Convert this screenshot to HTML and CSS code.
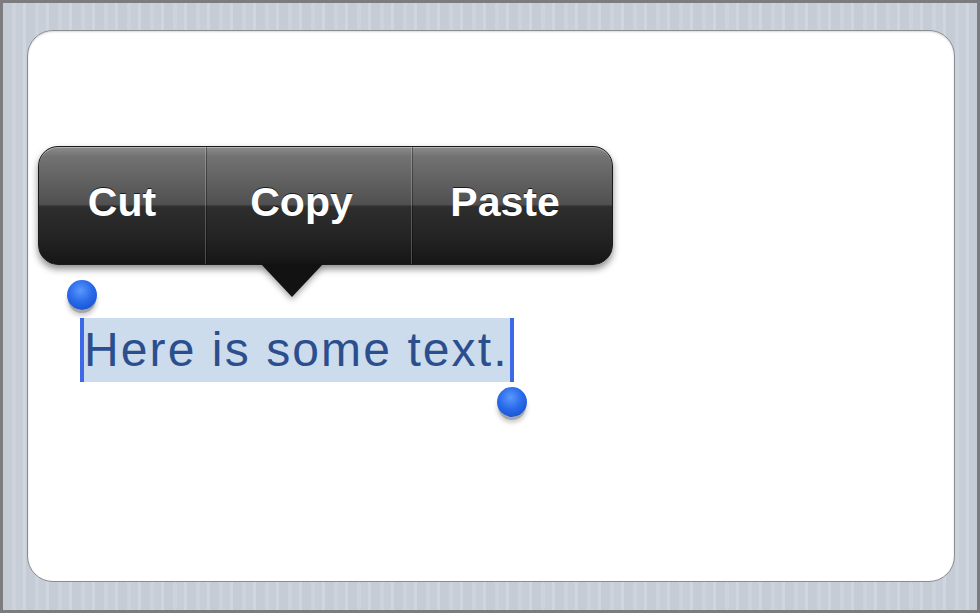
FILE: index.html
```
<!DOCTYPE html>
<html lang="en">
<head>
    <meta charset="UTF-8">
    <meta name="viewport" content="width=device-width, initial-scale=1.0">
    <title>Edit Menu</title>
    <link rel="stylesheet" href="styles.css">
</head>
<body>
    <div class="frame">
        <div class="card">
            <div class="edit-menu">
                <div class="menu-item">Cut</div>
                <div class="menu-item">Copy</div>
                <div class="menu-item">Paste</div>
                <div class="menu-arrow"></div>
            </div>
            <div class="content">
                <span class="selection">Here is some text.<span class="handle start"></span><span class="handle end"></span></span>
            </div>
        </div>
    </div>
</body>
</html>
```

FILE: styles.css
```
* {
    box-sizing: border-box;
}
body {
    margin: 0;
    padding: 0;
    font-family: "Liberation Sans", Arial, sans-serif;
    overflow: hidden;
}
.frame {
    width: 980px;
    height: 613px;
    border: 3px solid #7c7c7e;
    padding: 27px 22px 28px 24px;
    background-color: #c9d0d9;
    background-image: repeating-linear-gradient(90deg, #c5ccd6 0 9px, #cdd3dc 9px 13px, #c7ced8 13px 20px, #d0d6de 20px 23px);
}
.card {
    position: relative;
    width: 928px;
    height: 552px;
    background: #fff;
    border: 1px solid #8a8c90;
    border-radius: 26px;
    box-shadow: inset 0 1px 2px rgba(0, 0, 0, 0.15);
}
.edit-menu {
    position: absolute;
    left: 10px;
    top: 115px;
    width: 575px;
    height: 119px;
    display: grid;
    grid-template-columns: 166px 206px 1fr;
    border: 1px solid #1a1a1a;
    border-radius: 20px;
    background: linear-gradient(#8c8c8c 0%, #727272 8%, #505050 49%, #2e2e2e 51%, #222 80%, #161616 100%);
    box-shadow: 0 4px 7px rgba(0, 0, 0, 0.45), inset 0 1px 0 rgba(255, 255, 255, 0.35);
    z-index: 2;
}
.menu-item {
    display: flex;
    align-items: center;
    justify-content: center;
    color: #fff;
    font-weight: bold;
    font-size: 41px;
    padding: 0 14px 6px 0;
    text-shadow: 0 -1px 0 rgba(0, 0, 0, 0.7);
    border-left: 1px solid rgba(255, 255, 255, 0.22);
    box-shadow: inset 1px 0 0 rgba(0, 0, 0, 0.35);
}
.menu-item:first-child {
    padding-right: 0;
    border-left: none;
    box-shadow: none;
}
.menu-arrow {
    position: absolute;
    left: 222px;
    top: 117px;
    width: 0;
    height: 0;
    border-left: 31px solid transparent;
    border-right: 31px solid transparent;
    border-top: 33px solid #121212;
    filter: drop-shadow(0 3px 3px rgba(0, 0, 0, 0.35));
}
.content {
    padding: 287px 0 0 52px;
}
.selection {
    position: relative;
    display: inline-block;
    height: 64px;
    line-height: 64px;
    padding: 0 1px 0 0;
    font-size: 48px;
    letter-spacing: 2.1px;
    color: #2b4f8e;
    background: #cddcec;
    border-left: 4px solid #3d68e8;
    border-right: 4px solid #3d68e8;
}
.handle {
    position: absolute;
    width: 30px;
    height: 30px;
    border-radius: 50%;
    background: radial-gradient(circle at 45% 35%, #5a98fb 0%, #2a6bea 45%, #0f46c4 100%);
    box-shadow: 0 4px 0 -1px rgba(150, 150, 150, 0.7), 0 6px 4px rgba(0, 0, 0, 0.2);
}
.handle.start {
    left: -17px;
    top: -38px;
}
.handle.end {
    right: -17px;
    top: 69px;
}
```
